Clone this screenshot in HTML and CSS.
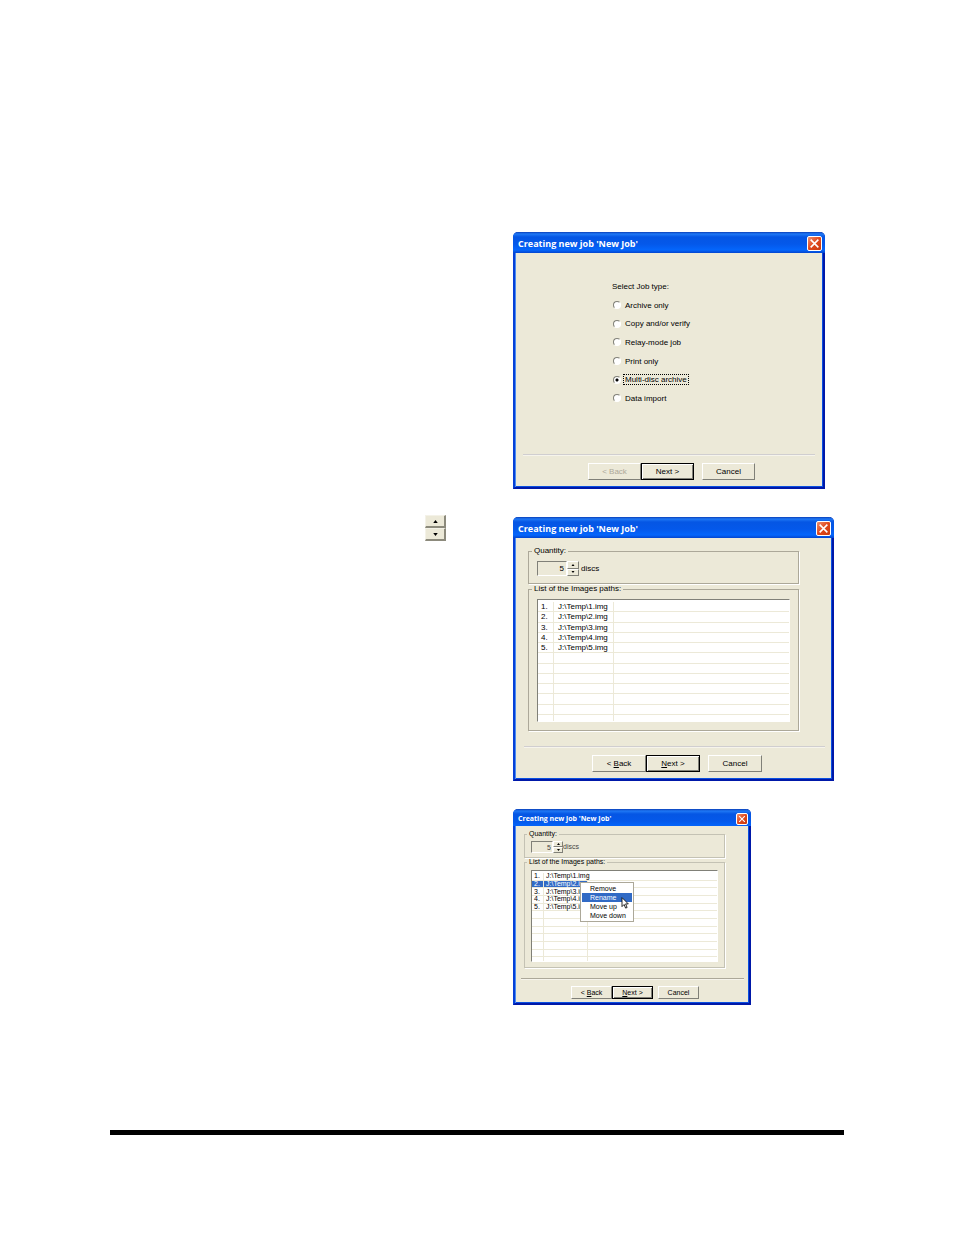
FILE: index.html
```html
<!DOCTYPE html>
<html lang="en">
<head>
  <meta charset="UTF-8">
  <title>Creating new job</title>
  <link rel="stylesheet" href="styles.css">
</head>
<body>
  <main class="page">
    <!-- job type -->
    <div class="row">
      <div class="side"></div>
      <section class="dialog type">
        <header class="titlebar">
          <h2>Creating new job 'New Job'</h2>
          <button class="close" type="button" aria-label="Close"><svg viewBox="0 0 10 10"><path d="M1.5 1.5 8.5 8.5M8.5 1.5 1.5 8.5"/></svg></button>
        </header>
        <form class="body">
          <div class="choices">
            <div class="ask">Select Job type:</div>
            <label><input type="radio" name="job"><span>Archive only</span></label>
            <label><input type="radio" name="job"><span>Copy and/or verify</span></label>
            <label><input type="radio" name="job"><span>Relay-mode job</span></label>
            <label><input type="radio" name="job"><span>Print only</span></label>
            <label><input type="radio" name="job" checked><span class="focus">Multi-disc archive</span></label>
            <label><input type="radio" name="job"><span>Data import</span></label>
          </div>
          <div class="actions">
            <button class="btn" type="button" disabled>&lt; Back</button>
            <button class="btn default" type="button">Next &gt;</button>
            <button class="btn cancel" type="button">Cancel</button>
          </div>
        </form>
      </section>
    </div>

    <!-- list of images -->
    <div class="row">
      <div class="side">
        <div class="spin big">
          <button type="button" aria-label="Up"><svg viewBox="0 0 6 4"><path d="M3 0 6 4H0z"/></svg></button>
          <button type="button" aria-label="Down"><svg viewBox="0 0 6 4"><path d="M0 0H6L3 4z"/></svg></button>
        </div>
      </div>
      <section class="dialog list">
        <header class="titlebar">
          <h2>Creating new job 'New Job'</h2>
          <button class="close" type="button" aria-label="Close"><svg viewBox="0 0 10 10"><path d="M1.5 1.5 8.5 8.5M8.5 1.5 1.5 8.5"/></svg></button>
        </header>
        <form class="body">
          <fieldset>
            <legend>Quantity:</legend>
            <div class="quantity">
              <input id="qty" type="text" value="5">
              <div class="spin">
                <button type="button" aria-label="More"><svg viewBox="0 0 6 4"><path d="M3 0 6 4H0z"/></svg></button>
                <button type="button" aria-label="Less"><svg viewBox="0 0 6 4"><path d="M0 0H6L3 4z"/></svg></button>
              </div>
              <label for="qty">discs</label>
            </div>
          </fieldset>
          <fieldset>
            <legend>List of the Images paths:</legend>
            <div class="paths">
              <table>
                <tr><td>1.</td><td>J:\Temp\1.img</td><td></td></tr>
                <tr><td>2.</td><td>J:\Temp\2.img</td><td></td></tr>
                <tr><td>3.</td><td>J:\Temp\3.img</td><td></td></tr>
                <tr><td>4.</td><td>J:\Temp\4.img</td><td></td></tr>
                <tr><td>5.</td><td>J:\Temp\5.img</td><td></td></tr>
                <tr><td></td><td></td><td></td></tr>
                <tr><td></td><td></td><td></td></tr>
                <tr><td></td><td></td><td></td></tr>
                <tr><td></td><td></td><td></td></tr>
                <tr><td></td><td></td><td></td></tr>
                <tr><td></td><td></td><td></td></tr>
                <tr><td></td><td></td><td></td></tr>
              </table>
            </div>
          </fieldset>
          <div class="actions">
            <button class="btn" type="button">&lt; <u>B</u>ack</button>
            <button class="btn default" type="button"><u>N</u>ext &gt;</button>
            <button class="btn cancel" type="button">Cancel</button>
          </div>
        </form>
      </section>
    </div>

    <!-- list with its context menu open -->
    <div class="row">
      <div class="side"></div>
      <section class="dialog list small">
        <header class="titlebar">
          <h2>Creating new job 'New Job'</h2>
          <button class="close" type="button" aria-label="Close"><svg viewBox="0 0 10 10"><path d="M1.5 1.5 8.5 8.5M8.5 1.5 1.5 8.5"/></svg></button>
        </header>
        <form class="body">
          <fieldset>
            <legend>Quantity:</legend>
            <div class="quantity">
              <input id="qty2" type="text" value="5">
              <div class="spin">
                <button type="button" aria-label="More"><svg viewBox="0 0 6 4"><path d="M3 0 6 4H0z"/></svg></button>
                <button type="button" aria-label="Less"><svg viewBox="0 0 6 4"><path d="M0 0H6L3 4z"/></svg></button>
              </div>
              <label for="qty2">discs</label>
            </div>
          </fieldset>
          <fieldset>
            <legend>List of the Images paths:</legend>
            <div class="pathbox">
              <div class="paths">
                <table>
                  <tr><td>1.</td><td>J:\Temp\1.img</td><td></td></tr>
                  <tr class="selected"><td>2.</td><td>J:\Temp\2.img</td><td></td></tr>
                  <tr><td>3.</td><td>J:\Temp\3.img</td><td></td></tr>
                  <tr><td>4.</td><td>J:\Temp\4.img</td><td></td></tr>
                  <tr><td>5.</td><td>J:\Temp\5.img</td><td></td></tr>
                  <tr><td></td><td></td><td></td></tr>
                  <tr><td></td><td></td><td></td></tr>
                  <tr><td></td><td></td><td></td></tr>
                  <tr><td></td><td></td><td></td></tr>
                  <tr><td></td><td></td><td></td></tr>
                  <tr><td></td><td></td><td></td></tr>
                  <tr><td></td><td></td><td></td></tr>
                </table>
              </div>
              <div class="menu">
                <button type="button">Remove</button>
                <button class="active" type="button">Rename</button>
                <button type="button">Move up</button>
                <button type="button">Move down</button>
                <svg class="pointer" viewBox="0 0 12 20"><path d="M1 1V16L4.500 12.500 7 18.500 9.500 17.500 7 11.500H11.500z"/></svg>
              </div>
            </div>
          </fieldset>
          <div class="actions">
            <button class="btn" type="button">&lt; <u>B</u>ack</button>
            <button class="btn default" type="button"><u>N</u>ext &gt;</button>
            <button class="btn cancel" type="button">Cancel</button>
          </div>
        </form>
      </section>
    </div>

    <hr class="rule">
  </main>
</body>
</html>
```
FILE: styles.css
```css
* { box-sizing: border-box; }
body { margin: 0; background: #fff; color: #000; font-family: "Liberation Sans", Arial, sans-serif; font-size: 8px; line-height: 10px; }
button, input { font: inherit; color: inherit; }
.page { padding: 230px 110px 100px; display: flex; flex-direction: column; gap: 26px; }
.row { display: grid; grid-template-columns: minmax(0, 1fr) 331px; }
.side { display: flex; justify-content: flex-end; align-items: flex-start; padding-right: 67px; }
.rule { width: 100%; height: 5px; margin: 99px 0 0; border: 0; background: #000; }

/* window frame */
.dialog {
  display: flex;
  flex-direction: column;
  margin-top: 2px;
  background: #ece9d8;
  border: 2px solid #0540d8;
  border-top: 0;
  border-color: #0540d8 #0018a8 #0018a8 #0540d8;
  border-radius: 5px 5px 0 0;
  box-shadow: inset 1px 0 #4a8cf0, inset -1px -1px #0a50e0;
}
.dialog.type { width: 312px; min-height: 257px; }
.dialog.list { width: 321px; min-height: 264px; }
.dialog.small { width: 238px; min-height: 196px; font-size: 7px; line-height: 8px; }
.titlebar {
  display: flex;
  align-items: center;
  justify-content: space-between;
  height: 21px;
  margin: 0 -2px;
  padding: 2px 3px 0 5px;
  border-radius: 5px 5px 0 0;
  background: linear-gradient(#0a3fb8 0, #1f78f5 2px, #0556e4 5px, #0458ea 12px, #0466fc 18px, #0345cf 21px);
}
.titlebar h2 { margin: 0; font-family: "Open Sans", "Noto Sans", sans-serif; font-size: 9px; line-height: 11px; font-weight: 700; color: #fff; white-space: nowrap; }
.close { width: 15px; height: 15px; padding: 1px; border: 1px solid #fff; border-radius: 2px; background: linear-gradient(135deg, #f09070, #e0481c 50%, #c83a10); }
.close svg { display: block; width: 100%; height: 100%; fill: none; stroke: #fff; stroke-width: 1.4; }
.small .titlebar { height: 17px; }
.small h2 { font-size: 7px; line-height: 9px; }
.small .close { width: 12px; height: 12px; }
.body { flex: 1; display: flex; flex-direction: column; margin: 0; padding: 8px 7px 7px 9px; }
.type .body { padding: 8px 8px 7px; }
.small .body { padding: 4px 5px 4px 6px; }

/* job type choices */
.choices { display: flex; flex-direction: column; justify-content: space-between; height: 122px; margin: 21px 0 0 89px; }
.choices label { display: flex; align-items: center; gap: 2px; }
.choices span { padding: 0 1px; border: 1px solid transparent; line-height: 9px; }
.choices .focus { border: 1px dotted #000; }
input[type=radio] {
  appearance: none;
  width: 8px;
  height: 8px;
  margin: 0 0 0 1px;
  border: 1px solid;
  border-color: #808078 #fff #fff #808078;
  border-radius: 50%;
  background: #fff;
}
input[type=radio]:checked { background: radial-gradient(circle, #000 1px, #fff 2px); }

/* group boxes */
fieldset { margin: 0 26px 0 4px; padding: 0 3px; border: 1px solid #aca899; box-shadow: 1px 1px #fff; min-width: 0; }
legend { padding: 0 2px; }
.small fieldset { margin: 0 19px 0 3px; padding: 0 2px; border-color: #c4c2b4; }
.quantity { display: flex; align-items: center; height: 15px; margin: 5px 5px 7px; }
.quantity input { width: 30px; height: 15px; padding: 0 2px; text-align: right; background: #ece9d8; border: 1px solid; border-color: #808078 #fff #fff #808078; border-radius: 0; }
.quantity label { padding-left: 2px; }
.spin { display: flex; flex-direction: column; width: 12px; height: 15px; }
.spin button { flex: 1; display: flex; align-items: center; justify-content: center; min-height: 0; padding: 0; background: #ece9d8; border: 1px solid; border-color: #fff #808078 #808078 #fff; border-radius: 0; }
.spin svg { width: 4px; height: 2px; }
.spin.big { width: 21px; height: 26px; }
.spin.big button { border-right-width: 2px; border-bottom-width: 2px; border-color: #f4f2e8 #8c8a7c #8c8a7c #f4f2e8; }
.spin.big svg { width: 5px; height: 3px; }
.small .quantity { height: 12px; margin: 3px 4px 4px; color: #444; }
.small .quantity input { width: 22px; height: 12px; padding: 0 1px; }
.small .quantity label { padding-left: 0; }
.small .spin { width: 10px; height: 12px; }
.small .spin svg { width: 3px; height: 2px; }

/* image list */
.paths { height: 123px; margin: 5px 5px 8px; padding-top: 2px; overflow: hidden; background: #fff; border: 1px solid; border-color: #808078 #fff #fff #808078; }
.paths table { width: 100%; height: 123px; border-collapse: separate; border-spacing: 0; table-layout: fixed; }
.paths tr { height: 10px; }
.paths td { padding: 0 0 0 4px; border-right: 1px solid #ece9d8; border-bottom: 1px solid #ece9d8; white-space: nowrap; line-height: 9px; }
.paths td:first-child { width: 16px; padding-left: 3px; }
.paths td:nth-child(2) { width: 60px; }
.paths td:last-child { border-right: 0; }
.pathbox { position: relative; }
.small .paths { height: 92px; margin: 4px 4px 5px; }
.small .paths table { height: 92px; }
.small .paths tr { height: 7px; }
.small .paths td { padding-left: 2px; line-height: 6px; }
.small .paths td:first-child { width: 12px; }
.small .paths td:nth-child(2) { width: 44px; }
.paths .selected td:nth-child(-n+2) { background: #316ac5; color: #fff; }

/* context menu */
.menu { position: absolute; left: 53px; top: 12px; width: 54px; padding: 1px; background: #fff; border: 1px solid #aca899; }
.menu button { display: block; width: 100%; height: 9px; padding: 0 0 0 8px; border: 0; background: none; text-align: left; line-height: 9px; }
.menu .active { background: #316ac5; color: #fff; }
.pointer { position: absolute; left: 40px; top: 14px; width: 8px; height: 12px; fill: #fff; stroke: #000; stroke-width: 1.4; }

/* bottom buttons */
.actions { display: flex; justify-content: center; margin-top: auto; padding: 8px 0 0 5px; border-top: 1px solid #d0ced0; box-shadow: inset 0 1px #f6f4ec; }
.btn { width: 54px; height: 17px; padding: 0; background: #ece9d8; border: 1px solid; border-color: #fff #808078 #808078 #fff; border-radius: 0; white-space: nowrap; }
.btn:disabled { color: #aca899; }
.btn.default { border: 1px solid #000; box-shadow: inset 1px 1px #fff, inset -1px -1px #808078; }
.btn.cancel { margin-left: 8px; }
.type .btn { width: 53px; }
.small .actions { padding-top: 7px; border-color: #aca899; }
.small .btn { width: 41px; height: 13px; }
.small .btn.cancel { margin-left: 5px; }
```
